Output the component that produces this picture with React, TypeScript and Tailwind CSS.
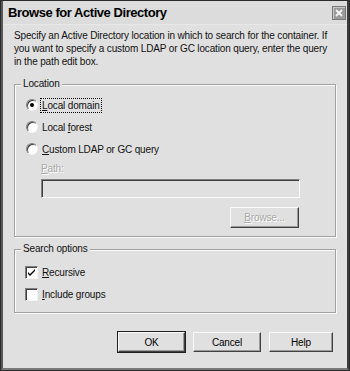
import React from "react";

const font = { fontFamily: '"Liberation Sans", Arial, sans-serif' };

function Radio({ checked, label, access, focused }: { checked?: boolean; label: string; access: string; focused?: boolean }) {
  const idx = label.indexOf(access);
  return (
    <div className="flex items-center h-[22px]">
      <span className="w-[12px] h-[12px] rounded-full bg-white border border-t-[#808080] border-l-[#808080] border-b-[#f4f4f4] border-r-[#f4f4f4] shadow-[inset_1px_1px_0_#404040] flex items-center justify-center ml-[11px]">
        {checked && <span className="w-[4px] h-[4px] rounded-full bg-black" />}
      </span>
      <span className={`ml-[3px] px-[1px] leading-[13px] ${focused ? "outline outline-1 outline-dotted outline-black" : ""}`}>
        {label.slice(0, idx)}
        <span className="underline">{access}</span>
        {label.slice(idx + 1)}
      </span>
    </div>
  );
}

function Check({ checked, label, access }: { checked?: boolean; label: string; access: string }) {
  const idx = label.indexOf(access);
  return (
    <div className="flex items-center h-[22px]">
      <span className="w-[13px] h-[13px] bg-white border border-t-[#808080] border-l-[#808080] border-b-[#f4f4f4] border-r-[#f4f4f4] shadow-[inset_1px_1px_0_#404040] flex items-center justify-center ml-[10px]">
        {checked && (
          <svg width="9" height="9" viewBox="0 0 9 9">
            <path d="M1 4 L3 6 L8 1 L8 3 L3 8 L1 6 Z" fill="#000" />
          </svg>
        )}
      </span>
      <span className="ml-[4px]">
        {label.slice(0, idx)}
        <span className="underline">{access}</span>
        {label.slice(idx + 1)}
      </span>
    </div>
  );
}

function Button({ children, isDefault, disabled, className = "" }: { children: React.ReactNode; isDefault?: boolean; disabled?: boolean; className?: string }) {
  return (
    <div
      className={`h-[20px] flex items-center justify-center bg-[#e0e0e0] border border-t-[#fafafa] border-l-[#fafafa] border-b-[#404040] border-r-[#404040] shadow-[inset_-1px_-1px_0_#9a9a9a] ${
        isDefault ? "outline outline-1 outline-[#202020]" : ""
      } ${disabled ? "text-[#a8a8a8] [text-shadow:1px_1px_0_#fff]" : "text-black"} ${className}`}
    >
      {children}
    </div>
  );
}

function Group({ title, className = "", children }: { title: string; className?: string; children: React.ReactNode }) {
  return (
    <div className={`relative mx-[11px] border border-[#a2a2a2] shadow-[inset_1px_1px_0_#fafafa,1px_1px_0_#fafafa] ${className}`}>
      <span className="absolute left-[6px] top-[-8px] px-[2px] bg-[#e0e0e0] leading-[14px]">{title}</span>
      {children}
    </div>
  );
}

export default function App() {
  return (
    <div className="w-[350px] h-[371px] bg-[#2a2a2a] p-[1px]" style={font}>
      <div className="w-full h-full bg-[#e0e0e0] border-l-[2px] border-r-[2px] border-b-[2px] border-l-[#585858] border-r-[#3c3c3c] border-b-[#7a7a7a] flex flex-col text-[10px] tracking-[-0.15px] text-[#111]">
        <div className="h-[24px] flex items-center justify-between pl-[5px] pr-[1px] bg-[#dcdcdc] border-b border-[#e8e8e8]">
          <span className="text-[13px] font-bold text-black tracking-[-0.45px]">Browse for Active Directory</span>
          <span className="w-[14px] h-[14px] bg-[#9a9a9a] border border-[#7a7a7a] shadow-[inset_1px_1px_0_#c8c8c8] flex items-center justify-center">
            <svg width="8" height="8" viewBox="0 0 8 8">
              <path d="M1 1 L7 7 M7 1 L1 7" stroke="#f4f4f4" strokeWidth="1.8" />
            </svg>
          </span>
        </div>

        <p className="px-[11px] pt-[4px] leading-[13px]">
          Specify an Active Directory location in which to search for the container. If you want to specify a custom LDAP or GC location query, enter the query in the path edit box.
        </p>

        <Group title="Location" className="mt-[16px] h-[153px]">
          <div className="pt-[9px]">
            <Radio checked focused label="Local domain" access="L" />
            <Radio label="Local forest" access="f" />
            <Radio label="Custom LDAP or GC query" access="C" />
            <div className="ml-[26px] mt-[2px] leading-[14px] text-[#a8a8a8] [text-shadow:1px_1px_0_#fff]">
              <span className="underline">P</span>ath:
            </div>
            <div className="ml-[26px] mt-[3px] w-[259px] h-[19px] bg-[#e0e0e0] border border-t-[#808080] border-l-[#808080] border-b-[#fafafa] border-r-[#fafafa] shadow-[inset_1px_1px_0_#404040]" />
            <div className="flex justify-end mr-[36px] mt-[9px]">
              <Button disabled className="w-[69px] h-[21px]">
                <span>
                  <span className="underline">B</span>rowse...
                </span>
              </Button>
            </div>
          </div>
        </Group>

        <Group title="Search options" className="mt-[12px] h-[64px]">
          <div className="pt-[11px]">
            <Check checked label="Recursive" access="R" />
            <Check label="Include groups" access="I" />
          </div>
        </Group>

        <div className="flex justify-end gap-[8px] pr-[14px] mt-[19px]">
          <Button isDefault className="w-[67px]">OK</Button>
          <Button className="w-[68px]">Cancel</Button>
          <Button className="w-[64px]">Help</Button>
        </div>
      </div>
    </div>
  );
}
